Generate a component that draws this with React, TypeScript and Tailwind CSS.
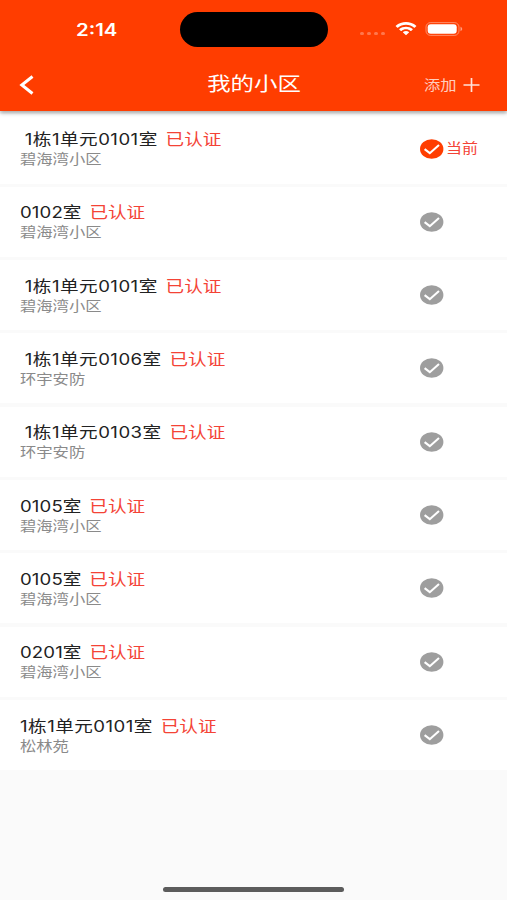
const rooms = [
  { name: "1栋1单元0101室", area: "碧海湾小区", indent: true, current: true },
  { name: "0102室", area: "碧海湾小区" },
  { name: "1栋1单元0101室", area: "碧海湾小区", indent: true },
  { name: "1栋1单元0106室", area: "环宇安防", indent: true },
  { name: "1栋1单元0103室", area: "环宇安防", indent: true },
  { name: "0105室", area: "碧海湾小区" },
  { name: "0105室", area: "碧海湾小区" },
  { name: "0201室", area: "碧海湾小区" },
  { name: "1栋1单元0101室", area: "松林苑" },
];

function StatusBar() {
  return (
    <div className="flex h-[58px] items-center">
      <div className="w-[180px] pl-[76px] pt-[2px]">
        <span className="inline-block origin-left scale-x-[1.2] text-[17px] font-semibold leading-none">
          2:14
        </span>
      </div>
      <div className="h-[35px] w-[148px] rounded-[18px] bg-black"></div>
      <div className="ml-[32px] mt-[9px] flex gap-[3px]">
        {[0, 1, 2, 3].map((i) => (
          <div key={i} className="h-[3px] w-[4px] rounded-full bg-white/30"></div>
        ))}
      </div>
      <svg
        className="ml-[10px] h-[14px] w-[22px]"
        viewBox="0 0 17 12"
        preserveAspectRatio="none"
        fill="white"
      >
        <path d="M8.5 2.4c2.4 0 4.6.9 6.3 2.5.1.1.3.1.4 0l1.2-1.2c.1-.1.1-.3 0-.5C12-1 5-1 .6 3.2c-.1.2-.1.4 0 .5l1.2 1.2c.1.1.3.1.4 0C3.900 3.300 6.100 2.400 8.500 2.400z" />
        <path d="M8.500 6.300c1.300 0 2.600.5 3.500 1.400.1.1.3.1.5 0l1.200-1.200c.1-.1.1-.3 0-.5-2.900-2.700-7.500-2.700-10.400 0-.1.2-.1.4 0 .5l1.200 1.200c.2.1.4.1.5 0 .9-.9 2.200-1.400 3.500-1.400z" />
        <path d="M10.800 9.100c.1-.2.1-.4 0-.5-1.300-1.100-3.300-1.100-4.600 0-.1.1-.1.300 0 .5l2.100 2.100c.1.100.3.100.4 0z" />
      </svg>
      <svg className="ml-[8px] h-[14px] w-[38px]" viewBox="0 0 38 14" fill="none">
        <rect x="1" y="0.600" width="33" height="12.800" rx="4.500" stroke="white" strokeOpacity="0.4" />
        <rect x="2.700" y="2.200" width="29" height="9.600" rx="3" fill="white" />
        <path d="M35.500 4.800v4.400c1-.4 1.700-1.200 1.700-2.200s-.7-1.800-1.700-2.200z" fill="white" fillOpacity="0.5" />
      </svg>
    </div>
  );
}

function Header() {
  return (
    <div className="relative z-10 h-[111px] bg-[#ff3d00] text-white shadow-[0_2px_4px_rgba(0,0,0,0.35)]">
      <StatusBar />
      <div className="grid h-[53px] grid-cols-3 items-center">
        <svg className="ml-[19px] h-[20px] w-[15px]" viewBox="0 0 15 20" fill="none">
          <path d="M13.500 1.500L2.800 10l10.700 8.500" stroke="white" strokeWidth="3" />
        </svg>
        <div className="pl-[1px] pt-[1px] text-center">
          <span className="inline-block scale-x-[1.2] text-[19.5px] leading-none">我的小区</span>
        </div>
        <div className="flex items-center justify-end pr-[27px] text-white/75">
          <span className="-mt-[2px] inline-block w-[33px] whitespace-nowrap">
            <span className="inline-block origin-left scale-x-[1.2] text-[13.6px]">添加</span>
          </span>
          <svg className="ml-[6px] h-[14px] w-[17px]" viewBox="0 0 17 14" fill="none">
            <path d="M0.500 7h16M8.500 0v14" stroke="white" strokeOpacity="0.850" strokeWidth="1.700" />
          </svg>
        </div>
      </div>
    </div>
  );
}

function Check({ active }: { active?: boolean }) {
  return (
    <svg className="h-[20px] w-[24px] shrink-0" viewBox="0 0 24 20" fill="none">
      <ellipse cx="11.700" cy="10" rx="11.700" ry="9.800" fill={active ? "#ff3d00" : "#9e9e9e"} />
      <path d="M4.600 10.200l5.200 4L19 6" stroke="white" strokeWidth="2.100" />
    </svg>
  );
}

function Room({ name, area, indent, current }: any) {
  const tracking = name.length > 5 ? "tracking-[0.4px]" : "tracking-[0.1px]";
  return (
    <div className="flex h-[70px] items-center bg-white pl-[20px]">
      <div className="w-[400px] pt-[1px]">
        <div className="relative top-[1px] flex origin-left scale-x-[1.2] gap-[6.5px] whitespace-nowrap text-[15.5px] leading-[20px]">
          <span className={`text-[#222] ${tracking} ${indent ? "pl-[4px]" : ""}`}>{name}</span>
          <span className="text-[#f44336]">已认证</span>
        </div>
        <div className="origin-left scale-x-[1.2] whitespace-nowrap text-[13.6px] leading-[20px] text-[#8a8a8a]">
          {area}
        </div>
      </div>
      <Check active={current} />
      {current && (
        <span className="ml-[2px] mt-[1px] inline-block origin-left scale-x-[1.2] whitespace-nowrap text-[13.300px] text-[#f44336]">
          当前
        </span>
      )}
    </div>
  );
}

export default function App() {
  return (
    <div className="flex h-[900px] w-[507px] flex-col overflow-hidden bg-[#fafafa] font-[Inter,'Noto_Sans_CJK_SC',sans-serif]">
      <Header />
      <div className="flex flex-col gap-[3.33px] pt-[2.500px]">
        {rooms.map((room, i) => (
          <Room key={i} {...room} />
        ))}
      </div>
      <div className="mx-auto mt-auto mb-[8px] h-[5px] w-[181px] rounded-full bg-[#5c5c5c]"></div>
    </div>
  );
}
